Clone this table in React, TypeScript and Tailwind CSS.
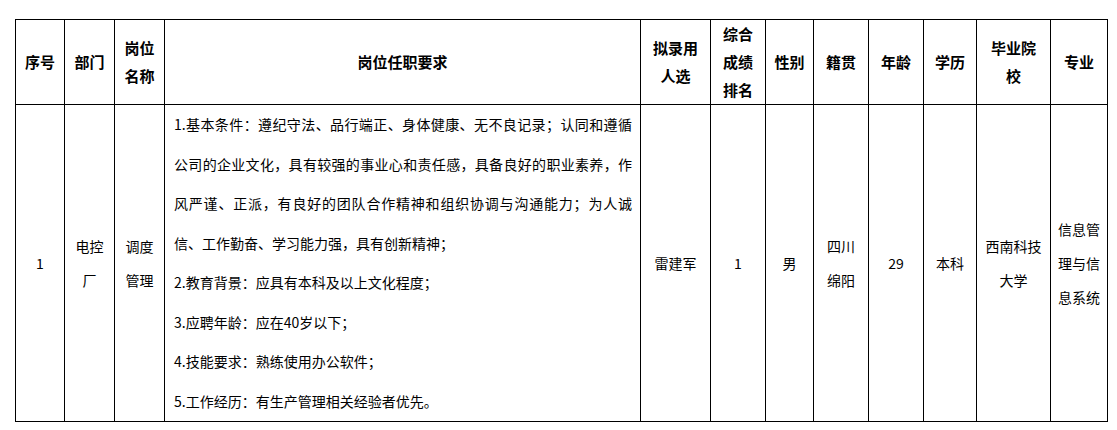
const font = { fontFamily: '"Noto Sans CJK SC", "Noto Sans", sans-serif' }

const headers: { lines: string[]; w: number }[] = [
  { lines: ['序号'], w: 49 },
  { lines: ['部门'], w: 50 },
  { lines: ['岗位', '名称'], w: 50 },
  { lines: ['岗位任职要求'], w: 476 },
  { lines: ['拟录用', '人选'], w: 70 },
  { lines: ['综合', '成绩', '排名'], w: 55 },
  { lines: ['性别'], w: 48 },
  { lines: ['籍贯'], w: 55 },
  { lines: ['年龄'], w: 55 },
  { lines: ['学历'], w: 53 },
  { lines: ['毕业院', '校'], w: 74 },
  { lines: ['专业'], w: 57 },
]

const requirements: { text: string; justify: boolean }[] = [
  { text: '1.基本条件：遵纪守法、品行端正、身体健康、无不良记录；认同和遵循', justify: true },
  { text: '公司的企业文化，具有较强的事业心和责任感，具备良好的职业素养，作', justify: true },
  { text: '风严谨、正派，有良好的团队合作精神和组织协调与沟通能力；为人诚', justify: true },
  { text: '信、工作勤奋、学习能力强，具有创新精神；', justify: false },
  { text: '2.教育背景：应具有本科及以上文化程度；', justify: false },
  { text: '3.应聘年龄：应在40岁以下；', justify: false },
  { text: '4.技能要求：熟练使用办公软件；', justify: false },
  { text: '5.工作经历：有生产管理相关经验者优先。', justify: false },
]

function Stack({ lines }: { lines: string[] }) {
  return (
    <div className="flex flex-col items-center leading-[34px]">
      {lines.map((l) => (
        <span key={l}>{l}</span>
      ))}
    </div>
  )
}

export default function App() {
  const cell = 'border border-black text-center align-middle p-0'
  return (
    <div className="bg-white w-[1117px] h-[430px] pt-[19px] pl-[15px]" style={font}>
      <table className="table-fixed border-collapse w-[1093px] text-black">
        <colgroup>
          {headers.map((h, i) => (
            <col key={i} style={{ width: h.w }} />
          ))}
        </colgroup>
        <thead>
          <tr className="h-[85px]">
            {headers.map((h, i) => (
              <th key={i} className={`${cell} text-[15px] font-bold leading-[28px]`}>
                {h.lines.map((l) => (
                  <div key={l}>{l}</div>
                ))}
              </th>
            ))}
          </tr>
        </thead>
        <tbody className="text-[14px]">
          <tr className="h-[317px]">
            <td className={cell}>1</td>
            <td className={cell}>
              <Stack lines={['电控', '厂']} />
            </td>
            <td className={cell}>
              <Stack lines={['调度', '管理']} />
            </td>
            <td className="border border-black align-middle pl-[9px] pr-[8px] py-0">
              <div className="leading-[39.5px] text-left">
                {requirements.map((r) => (
                  <div key={r.text} className={r.justify ? 'text-justify [text-align-last:justify]' : ''}>
                    {r.text}
                  </div>
                ))}
              </div>
            </td>
            <td className={cell}>雷建军</td>
            <td className={cell}>1</td>
            <td className={cell}>男</td>
            <td className={cell}>
              <Stack lines={['四川', '绵阳']} />
            </td>
            <td className={cell}>29</td>
            <td className={cell}>本科</td>
            <td className={cell}>
              <Stack lines={['西南科技', '大学']} />
            </td>
            <td className={cell}>
              <Stack lines={['信息管', '理与信', '息系统']} />
            </td>
          </tr>
        </tbody>
      </table>
    </div>
  )
}
